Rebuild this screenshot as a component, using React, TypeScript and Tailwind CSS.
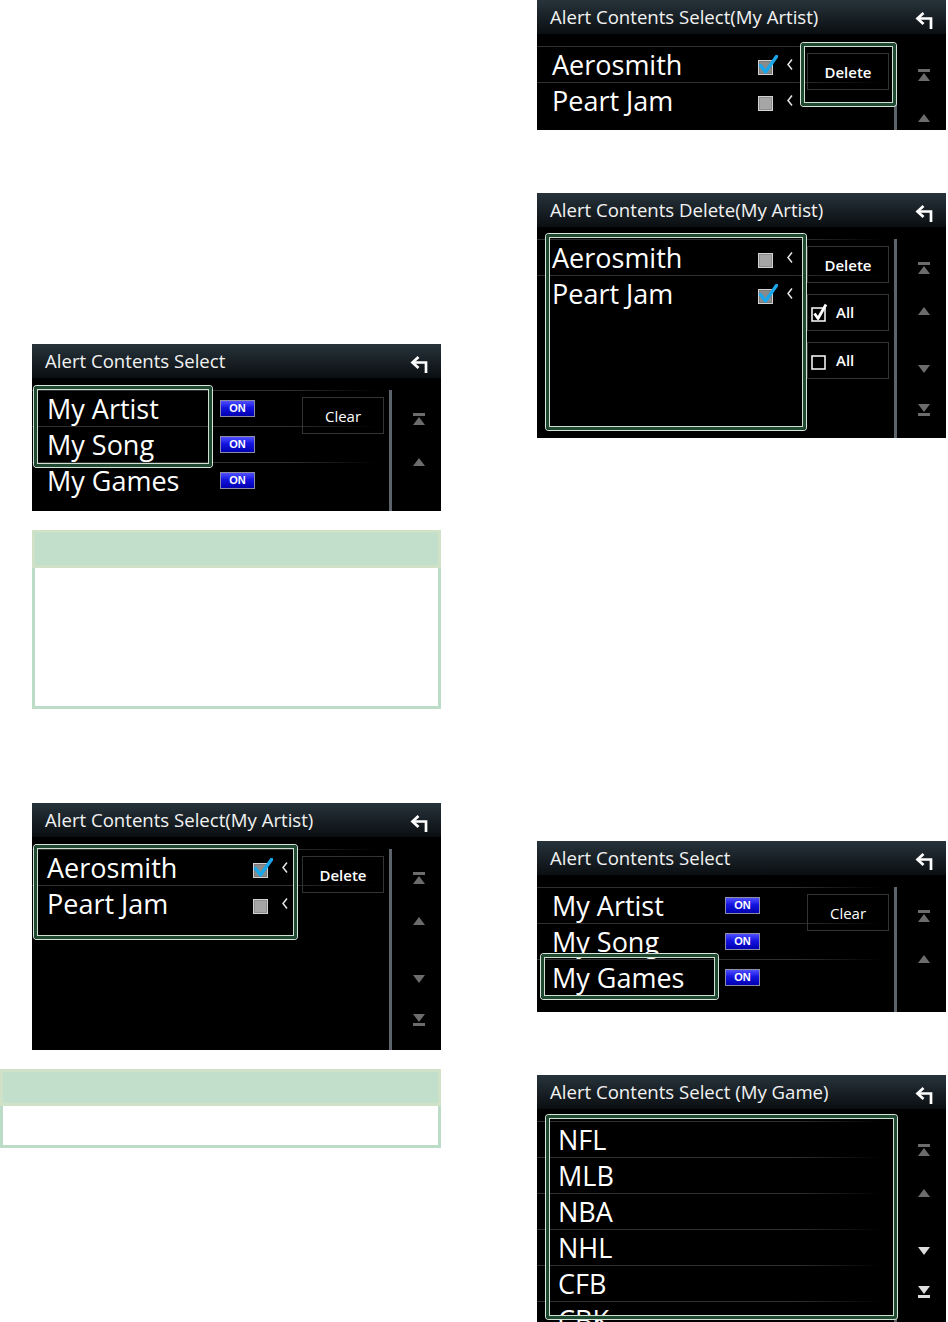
import React from "react";

type RowKind = "on" | "checked" | "unchecked" | "none";
type Row = { label: string; kind: RowKind };

const Back = () => (
  <svg width="19" height="17" viewBox="0 0 19 17" fill="none" stroke="#ffffff" strokeWidth="2.7">
    <path d="M8.5 1 L2.5 6.5 L8.5 12" />
    <path d="M2.5 6.5 H16 V17" />
  </svg>
);

const TopIcon = ({ color }: { color: string }) => (
  <svg width="12" height="12" viewBox="0 0 12 12" fill={color}>
    <rect x="0" y="0" width="12" height="3" />
    <polygon points="6,4 12,12 0,12" />
  </svg>
);

const UpIcon = ({ color }: { color: string }) => (
  <svg width="12" height="8" viewBox="0 0 12 8" fill={color}>
    <polygon points="6,0 12,8 0,8" />
  </svg>
);

const DownIcon = ({ color }: { color: string }) => (
  <svg width="12" height="8" viewBox="0 0 12 8" fill={color}>
    <polygon points="0,0 12,0 6,8" />
  </svg>
);

const BottomIcon = ({ color }: { color: string }) => (
  <svg width="12" height="12" viewBox="0 0 12 12" fill={color}>
    <polygon points="0,0 12,0 6,8" />
    <rect x="0" y="9" width="12" height="3" />
  </svg>
);

const Chevron = () => (
  <svg width="6" height="11" viewBox="0 0 6 11" fill="none" stroke="#e6e6e6" strokeWidth="1.5">
    <path d="M5 0.5 L1 5.5 L5 10.5" />
  </svg>
);

const GrayCheck = ({ on }: { on: boolean }) => (
  <svg width="20" height="20" viewBox="0 0 20 20">
    <rect x="0.5" y="5.5" width="14" height="14" fill={on ? "#7a7a7a" : "#8e8e8e"} stroke="#d2d2d2" />
    <rect x="2" y="7" width="11" height="11" fill={on ? "#8a8a8a" : "#a6a6a6"} />
    {on && (
      <path
        d="M2.5 10.5 L7.5 17 L18.5 1.5"
        stroke="#1aa6ea"
        strokeWidth="3.4"
        fill="none"
        strokeLinecap="round"
        strokeLinejoin="round"
      />
    )}
  </svg>
);

const WhiteCheck = ({ on }: { on: boolean }) => (
  <svg width="18" height="20" viewBox="0 0 18 20" fill="none" stroke="#ffffff">
    <rect x="1" y="5" width="13" height="13" strokeWidth="1.5" />
    {on && <path d="M3.5 10.5 L7 15.5 L15 1.5" strokeWidth="2.8" strokeLinejoin="round" />}
  </svg>
);

const OnBadge = () => (
  <div className="w-[35px] h-[17px] border border-[#8c8ca6] bg-[linear-gradient(to_bottom,#5050ff,#1414e0_45%,#0000b0)] flex items-center justify-center text-white text-[11px] font-bold leading-none font-['Liberation_Sans',sans-serif]">
    ON
  </div>
);

const Btn = ({ children, bold }: { children: React.ReactNode; bold?: boolean }) => (
  <div
    className={`w-[82px] h-[37px] border border-[#343434] flex items-center justify-center pt-[2px] text-white text-[15px] ${
      bold ? "font-semibold" : ""
    }`}
  >
    {children}
  </div>
);

const AllBtn = ({ on }: { on: boolean }) => (
  <div className="w-[82px] h-[37px] border border-[#343434] flex items-center pl-[3px] gap-[7px] text-white text-[15px] font-semibold">
    <WhiteCheck on={on} />
    <span>All</span>
  </div>
);

function ListRow({ row, pad }: { row: Row; pad: string }) {
  return (
    <div className="flex flex-col">
      <div className="h-px w-[345px] bg-[linear-gradient(to_right,#303030_75%,transparent)]" />
      <div className={`h-[35px] flex items-center ${pad}`}>
        <span
          className={`text-[27px] leading-[35px] text-white whitespace-nowrap ${
            row.kind === "on" ? "w-[173px]" : row.kind === "none" ? "" : "w-[206px]"
          }`}
        >
          {row.label}
        </span>
        {row.kind === "on" && <OnBadge />}
        {(row.kind === "checked" || row.kind === "unchecked") && (
          <>
            <GrayCheck on={row.kind === "checked"} />
            <div className="ml-[9px]">
              <Chevron />
            </div>
          </>
        )}
      </div>
    </div>
  );
}

function Panel({
  title,
  className,
  rows,
  pad = "pl-[15px]",
  buttons,
  colors = ["#6c6c6c", "#6c6c6c", "#6c6c6c", "#6c6c6c"],
  box,
}: {
  title: string;
  className: string;
  rows: Row[];
  pad?: string;
  buttons?: React.ReactNode;
  colors?: string[];
  box: string;
}) {
  return (
    <div className={`relative w-[409px] shrink-0 overflow-hidden bg-black flex flex-col ${className}`}>
      <div className="h-[34px] shrink-0 flex items-center justify-between pl-[13px] pr-[12px] bg-[linear-gradient(to_bottom,#27333b,#0a0e11)]">
        <span className="text-[18.6px] leading-[32px] text-[#f2f2f2] whitespace-nowrap">{title}</span>
        <div className="mt-[6px]">
          <Back />
        </div>
      </div>
      <div className="flex-1 min-h-0 flex pt-[12px]">
        <div className="w-[357px] grid content-start">
          <div className="col-start-1 row-start-1 flex flex-col">
            {rows.map((r) => (
              <ListRow key={r.label} row={r} pad={pad} />
            ))}
          </div>
          {buttons && (
            <div className="col-start-1 row-start-1 justify-self-end self-start mr-[5px] mt-[7px] flex flex-col gap-[11px]">
              {buttons}
            </div>
          )}
        </div>
        <div className="w-[3px] bg-[#5c636a]" />
        <div className="w-[49px] flex flex-col items-center pl-[5px]">
          <div className="mt-[23px]">
            <TopIcon color={colors[0]} />
          </div>
          <div className="mt-[33px] flex">
            <UpIcon color={colors[1]} />
          </div>
          <div className="mt-[50px] flex">
            <DownIcon color={colors[2]} />
          </div>
          <div className="mt-[31px] flex">
            <BottomIcon color={colors[3]} />
          </div>
        </div>
      </div>
      <div
        className={`absolute rounded-[3px] border-[3px] border-[#1f4a31] shadow-[0_0_0_1px_#d6e4d9,inset_0_0_0_1px_#cfe0d3] ${box}`}
      />
    </div>
  );
}

function Note({ className, head }: { className: string; head: string }) {
  return (
    <div className={`flex flex-col shrink-0 ${className}`}>
      <div className={`${head} bg-[#c2dfcc] border-[3px] border-[#cfe1c7]`} />
      <div className="flex-1 bg-white border-[3px] border-t-0 border-[#bddcc8]" />
    </div>
  );
}

const songs: Row[] = [
  { label: "My Artist", kind: "on" },
  { label: "My Song", kind: "on" },
  { label: "My Games", kind: "on" },
];

const artistsA: Row[] = [
  { label: "Aerosmith", kind: "checked" },
  { label: "Peart Jam", kind: "unchecked" },
];

const artistsB: Row[] = [
  { label: "Aerosmith", kind: "unchecked" },
  { label: "Peart Jam", kind: "checked" },
];

const games: Row[] = ["NFL", "MLB", "NBA", "NHL", "CFB", "CBK"].map((g) => ({ label: g, kind: "none" as RowKind }));

export default function App() {
  return (
    <div className="w-[948px] h-[1322px] overflow-hidden bg-white flex font-['Open_Sans','Noto_Sans',sans-serif]">
      <div className="w-[441px] shrink-0 flex flex-col pt-[344px]">
        <Panel
          title="Alert Contents Select"
          className="ml-[32px] h-[167px]"
          rows={songs}
          buttons={<Btn>Clear</Btn>}
          box="left-[2px] top-[42px] w-[178px] h-[81px]"
        />
        <Note className="ml-[32px] mt-[19px] w-[409px] h-[179px]" head="h-[38px]" />
        <Panel
          title="Alert Contents Select(My Artist)"
          className="ml-[32px] mt-[94px] h-[247px]"
          rows={artistsA}
          buttons={<Btn bold>Delete</Btn>}
          box="left-[2px] top-[42px] w-[263px] h-[94px]"
        />
        <Note className="mt-[19px] w-[441px] h-[79px]" head="h-[37px]" />
      </div>
      <div className="ml-[96px] w-[409px] shrink-0 flex flex-col">
        <Panel
          title="Alert Contents Select(My Artist)"
          className="h-[130px]"
          rows={artistsA}
          buttons={<Btn bold>Delete</Btn>}
          box="left-[264px] top-[43px] w-[95px] h-[63px]"
        />
        <Panel
          title="Alert Contents Delete(My Artist)"
          className="mt-[63px] h-[245px]"
          rows={artistsB}
          buttons={
            <>
              <Btn bold>Delete</Btn>
              <AllBtn on />
              <AllBtn on={false} />
            </>
          }
          box="left-[9px] top-[41px] w-[260px] h-[196px]"
        />
        <Panel
          title="Alert Contents Select"
          className="mt-[403px] h-[171px]"
          rows={songs}
          buttons={<Btn>Clear</Btn>}
          box="left-[4px] top-[113px] w-[177px] h-[45px]"
        />
        <Panel
          title="Alert Contents Select (My Game)"
          className="mt-[63px] h-[260px]"
          rows={games}
          pad="pl-[21px]"
          colors={["#6c6c6c", "#6c6c6c", "#dcdcdc", "#dcdcdc"]}
          box="left-[9px] top-[40px] w-[351px] h-[204px]"
        />
      </div>
    </div>
  );
}
